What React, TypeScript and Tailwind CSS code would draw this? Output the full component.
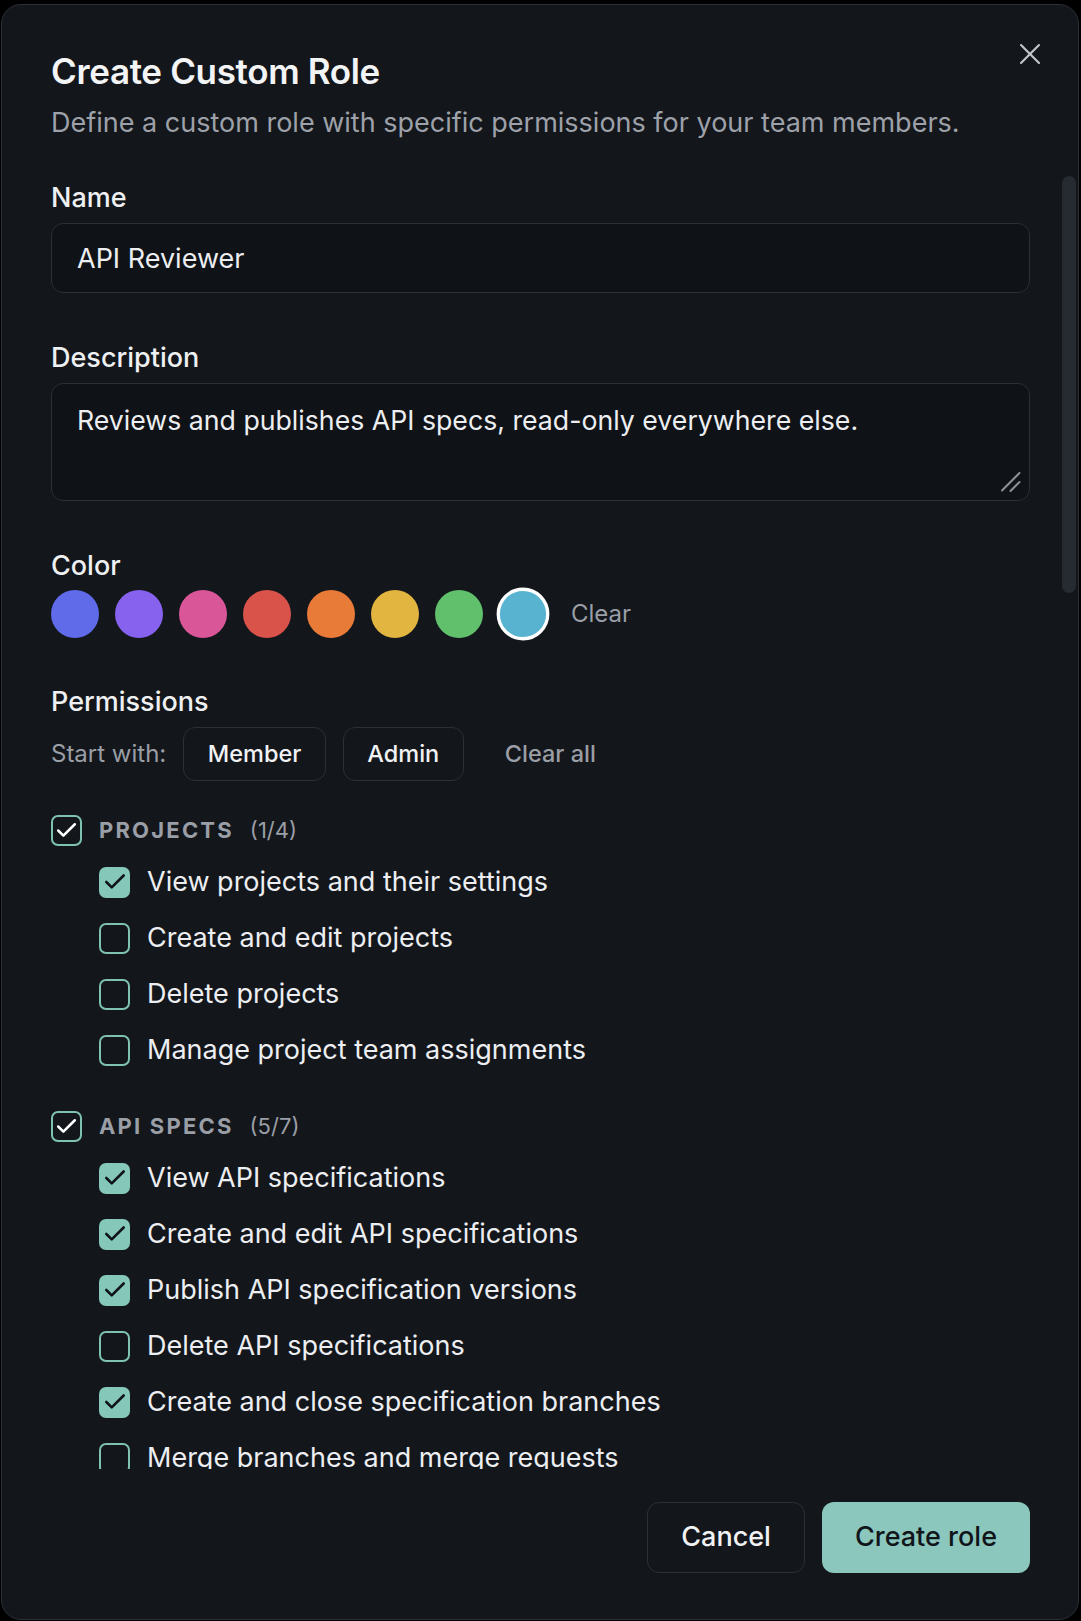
import { X } from "lucide-react";

type Group = {
  title: string;
  items: { label: string; on: boolean }[];
};

const COLORS = [
  "bg-[#5f6be9]",
  "bg-[#8662ef]",
  "bg-[#d95799]",
  "bg-[#d9534b]",
  "bg-[#e97b39]",
  "bg-[#e2b541]",
  "bg-[#61c06b]",
  "bg-[#57b3cf]",
];

const GROUPS: Group[] = [
  {
    title: "Projects",
    items: [
      { label: "View projects and their settings", on: true },
      { label: "Create and edit projects", on: false },
      { label: "Delete projects", on: false },
      { label: "Manage project team assignments", on: false },
    ],
  },
  {
    title: "API Specs",
    items: [
      { label: "View API specifications", on: true },
      { label: "Create and edit API specifications", on: true },
      { label: "Publish API specification versions", on: true },
      { label: "Delete API specifications", on: false },
      { label: "Create and close specification branches", on: true },
      { label: "Merge branches and merge requests", on: false },
      { label: "Comment on API specifications", on: true },
    ],
  },
];

function Check({ className }: { className: string }) {
  return (
    <svg
      viewBox="0 0 24 24"
      className={className}
      fill="none"
      stroke="currentColor"
      strokeWidth={2.4}
      strokeLinecap="round"
      strokeLinejoin="round"
    >
      <path d="M20 6 9 17l-5-5" />
    </svg>
  );
}

function Box({ state }: { state: "on" | "off" | "parent" }) {
  if (state === "on") {
    return (
      <span className="flex h-[31px] w-[31px] shrink-0 items-center justify-center rounded-[7px] bg-[#85c8ba]">
        <Check className="h-[26px] w-[26px] text-[#10141a]" />
      </span>
    );
  }
  return (
    <span className="flex h-[31px] w-[31px] shrink-0 items-center justify-center rounded-[7px] border-2 border-[#7fc2b3]">
      {state === "parent" && <Check className="h-[25px] w-[25px] text-white" />}
    </span>
  );
}

function PermissionGroup({ group }: { group: Group }) {
  const count = group.items.filter((i) => i.on).length;
  return (
    <div>
      <div className="flex h-[32px] items-center gap-[17px]">
        <Box state={count > 0 ? "parent" : "off"} />
        <span className="text-[22px] font-bold uppercase tracking-[0.1em] text-[#9a9ea6]">
          {group.title}
        </span>
        <span className="-ml-[1px] text-[22px] text-[#9a9ea6]">
          ({count}/{group.items.length})
        </span>
      </div>
      <div className="mt-[8px] pl-[48px]">
        {group.items.map((item) => (
          <label
            key={item.label}
            className="flex h-[56px] items-center gap-[17px] text-[27px] leading-[36px] text-[#eceef1]"
          >
            <Box state={item.on ? "on" : "off"} />
            {item.label}
          </label>
        ))}
      </div>
    </div>
  );
}

export default function App() {
  return (
    <div className="min-h-screen bg-black pt-[4px] pl-[1px] font-['Inter','Noto_Sans',sans-serif]">
      <div className="relative flex h-[1616px] w-[1078px] flex-col overflow-hidden rounded-[20px] border border-[#2b2f36] bg-[#13161b]">
        <header className="shrink-0 pt-[44px] pr-[32px] pb-[35px] pl-[49px]">
          <h1 className="text-[35px] leading-[44px] font-semibold tracking-[-0.01em] text-[#f3f4f6]">
            Create Custom Role
          </h1>
          <p className="mt-3 text-[27px] leading-[36px] text-[#9da1a9]">
            Define a custom role with specific permissions for your team members.
          </p>
        </header>
        <button className="absolute top-[31px] right-[30px] text-[#c3c6cb]">
          <X size={36} strokeWidth={1.4} />
        </button>

        <div className="relative min-h-0 flex-1">
          <div className="h-full overflow-hidden pt-[4px] pr-[48px] pl-[49px]">
            <div className="text-[27px] leading-[36px] font-medium text-[#eef0f2]">Name</div>
            <input
              defaultValue="API Reviewer"
              className="mt-[7px] h-[70px] w-full rounded-[12px] border border-[#2b2f36] bg-[#0f1216] px-[25px] text-[27px] text-[#eceef1] outline-none"
            />

            <div className="mt-[47px] text-[27px] leading-[36px] font-medium text-[#eef0f2]">
              Description
            </div>
            <div className="relative mt-[7px]">
              <textarea
                defaultValue="Reviews and publishes API specs, read-only everywhere else."
                className="block h-[118px] w-full resize-none rounded-[12px] border border-[#2b2f36] bg-[#0f1216] px-[25px] pt-[18px] text-[26.7px] leading-[36px] text-[#eceef1] outline-none"
              />
              <svg
                viewBox="0 0 20 20"
                className="pointer-events-none absolute right-[9px] bottom-[9px] h-[20px] w-[20px]"
                stroke="#8e9197"
                strokeWidth={2}
                strokeLinecap="round"
              >
                <path d="M1 18.5 18.5 1M9.5 19 18.5 10" />
              </svg>
            </div>

            <div className="mt-[47px] text-[27px] leading-[36px] font-medium text-[#eef0f2]">Color</div>
            <div className="mt-[6px] flex items-center gap-4">
              {COLORS.map((c, i) => (
                <button
                  key={c}
                  className={
                    i === COLORS.length - 1
                      ? `h-12 w-12 scale-110 rounded-full border-[3px] border-white ${c}`
                      : `h-12 w-12 rounded-full ${c}`
                  }
                />
              ))}
              <button className="px-[8px] text-[24px] text-[#9a9ea6]">Clear</button>
            </div>

            <div className="mt-[46px] text-[27px] leading-[36px] font-medium text-[#eef0f2]">
              Permissions
            </div>
            <div className="mt-[7px] flex items-center gap-[17px]">
              <span className="text-[24px] text-[#9a9ea6]">Start with:</span>
              <button className="h-[54px] rounded-[12px] border border-[#2b2f36] px-[23.5px] text-[23.5px] font-medium text-[#f1f2f4]">
                Member
              </button>
              <button className="h-[54px] rounded-[12px] border border-[#2b2f36] px-[23.5px] text-[23.5px] font-medium text-[#f1f2f4]">
                Admin
              </button>
              <button className="h-[54px] px-[24px] text-[23.5px] font-medium text-[#9a9ea6]">
                Clear all
              </button>
            </div>

            <div className="mt-[33px] flex flex-col gap-[32px]">
              {GROUPS.map((g) => (
                <PermissionGroup key={g.title} group={g} />
              ))}
            </div>
          </div>
          {/* scrollbar thumb */}
          <div className="absolute top-0 right-[2px] h-[417px] w-[14px] rounded-full bg-[#262b32]" />
        </div>

        <footer className="flex shrink-0 justify-end gap-[17px] pt-[33px] pr-[48px] pb-[46px]">
          <button className="h-[71px] rounded-[12px] border border-[#2b2f36] px-[33px] text-[27px] font-medium text-[#f1f2f4]">
            Cancel
          </button>
          <button className="h-[71px] rounded-[12px] bg-[#8bc7bc] px-[33px] text-[27px] font-medium text-[#10151b]">
            Create role
          </button>
        </footer>
      </div>
    </div>
  );
}
